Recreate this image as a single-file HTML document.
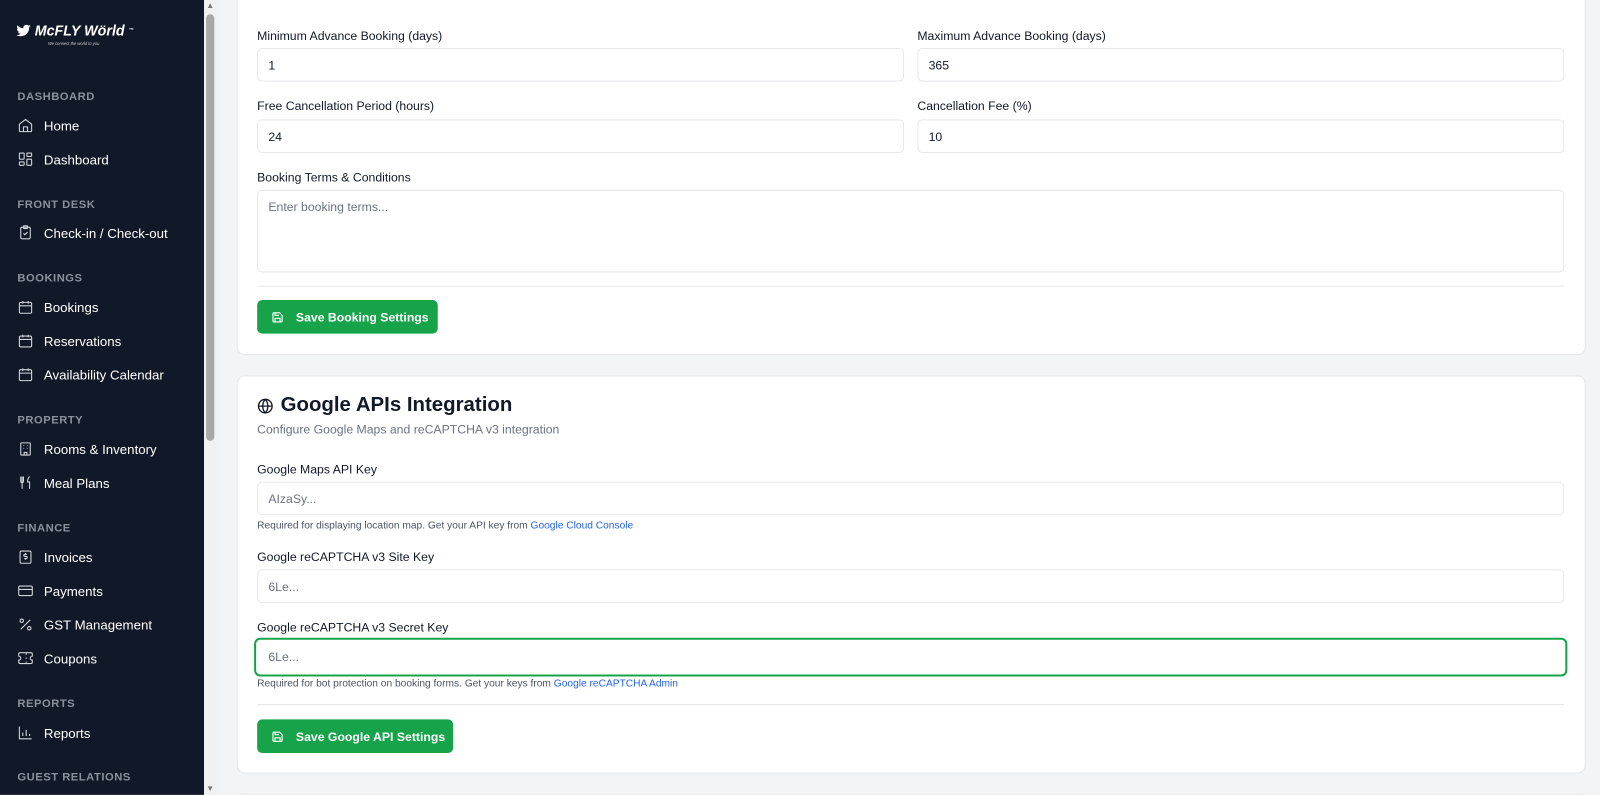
<!DOCTYPE html>
<html style="overflow:hidden;width:1600px;height:795px"><head><meta charset="utf-8"><style>
*{box-sizing:border-box;margin:0;padding:0}
body{width:1600px;height:795px;overflow:hidden;background:#f3f4f6;font-family:"Liberation Sans",Arial,sans-serif;color:#111827;position:relative}
.wrap{position:absolute;left:0;top:0;width:1568px;height:779px;overflow:hidden;transform:scale(1.020408);transform-origin:0 0}
.sb{position:absolute;left:0;top:0;width:200px;height:780px;background:#111827}
.scroll{position:absolute;left:200px;top:0;width:12px;height:780px;background:#f1f1f1}
.thumb{position:absolute;left:202px;top:14px;width:8px;height:418px;background:#a8a8a8;border-radius:4px}
.sh{position:absolute;left:17px;font-size:11px;color:#8b919c;letter-spacing:.5px;font-weight:bold}
.it{position:absolute;left:17px;font-size:13px;color:#fff;display:flex;align-items:center;gap:10px}
.it svg{width:16px;height:16px;stroke:#d1d5db;fill:none;stroke-width:1.6}
.card{position:absolute;left:232px;width:1322px;background:#fff;border:1px solid #e5e7eb;border-radius:8px}
.lbl{position:absolute;font-size:12px;color:#111827}
.inp{position:absolute;height:33px;border:1px solid #e5e7eb;border-radius:5px;font-size:12px;padding:0 10px;display:flex;align-items:center;background:#fff}
.ph{color:#6b7280}
.help{position:absolute;font-size:10px;color:#4b5563}
.help a{color:#2563eb;text-decoration:none}
.btn{position:absolute;height:33px;background:#16a34a;border-radius:5px;color:#fff;font-size:12px;font-weight:bold;display:flex;align-items:center;padding-left:14px;gap:12px}
.hr{position:absolute;left:252px;width:1281px;height:1px;background:#e5e7eb}
</style></head><body><div class="wrap">
<div class="sb">
<div style="position:absolute;left:16px;top:22px;color:#fff;font-weight:bold;font-style:italic;font-size:14px;display:flex;align-items:center;gap:4px"><svg width="14" height="12" viewBox="0 0 24 20"><path d="M24 2.4a10 10 0 0 1-2.8.8A5 5 0 0 0 23.3.4a10 10 0 0 1-3.1 1.2A5 5 0 0 0 11.8 6 14 14 0 0 1 1.7.9a5 5 0 0 0 1.5 6.6A5 5 0 0 1 1 6.9a5 5 0 0 0 3.9 4.8 5 5 0 0 1-2.2.1 5 5 0 0 0 4.6 3.4A10 10 0 0 1 0 17.3 14 14 0 0 0 7.5 19.5c9 0 14-7.5 14-14v-.6A10 10 0 0 0 24 2.4z" fill="#fff"/></svg>McFLY Wörld<sup style="font-size:5px">™</sup></div>
<div style="position:absolute;left:47px;top:40px;color:#ccc;font-size:4px;font-style:italic">We connect the world to you</div>
<div class="sh" style="top:89px">DASHBOARD</div>
<div class="it" style="top:115px"><svg viewBox="0 0 24 24"><path d="M3 10l9-7 9 7v10a1 1 0 0 1-1 1H4a1 1 0 0 1-1-1z M9 21v-7h6v7"/></svg>Home</div>
<div class="it" style="top:148px"><svg viewBox="0 0 24 24"><rect x="3" y="3" width="7" height="9" rx="1"/><rect x="14" y="3" width="7" height="5" rx="1"/><rect x="14" y="12" width="7" height="9" rx="1"/><rect x="3" y="16" width="7" height="5" rx="1"/></svg>Dashboard</div>
<div class="sh" style="top:195px">FRONT DESK</div>
<div class="it" style="top:220px"><svg viewBox="0 0 24 24"><rect x="5" y="4" width="14" height="17" rx="2"/><rect x="9" y="2" width="6" height="4" rx="1"/><path d="M9 13l2 2 4-4"/></svg>Check-in / Check-out</div>
<div class="sh" style="top:267px">BOOKINGS</div>
<div class="it" style="top:293px"><svg viewBox="0 0 24 24"><rect x="3" y="5" width="18" height="16" rx="2"/><path d="M3 10h18M8 3v4M16 3v4"/></svg>Bookings</div>
<div class="it" style="top:326px"><svg viewBox="0 0 24 24"><rect x="3" y="5" width="18" height="16" rx="2"/><path d="M3 10h18M8 3v4M16 3v4"/></svg>Reservations</div>
<div class="it" style="top:359px"><svg viewBox="0 0 24 24"><rect x="3" y="5" width="18" height="16" rx="2"/><path d="M3 10h18M8 3v4M16 3v4M8 14h.01M12 14h.01M16 14h.01M8 18h.01M12 18h.01"/></svg>Availability Calendar</div>
<div class="sh" style="top:406px">PROPERTY</div>
<div class="it" style="top:432px"><svg viewBox="0 0 24 24"><rect x="5" y="3" width="14" height="18" rx="1"/><path d="M10 21v-4h4v4M9 7h1M14 7h1M9 11h1M14 11h1"/></svg>Rooms &amp; Inventory</div>
<div class="it" style="top:465px"><svg viewBox="0 0 24 24"><path d="M5 3v7a2 2 0 0 0 4 0V3M7 3v18M18 3c-2 2-3 5-3 8h3v10"/></svg>Meal Plans</div>
<div class="sh" style="top:512px">FINANCE</div>
<div class="it" style="top:538px"><svg viewBox="0 0 24 24"><rect x="4" y="3" width="16" height="18" rx="2"/><path d="M14 8h-3a1.5 1.5 0 0 0 0 3h2a1.5 1.5 0 0 1 0 3h-3M12 6v2M12 14v2"/></svg>Invoices</div>
<div class="it" style="top:571px"><svg viewBox="0 0 24 24"><rect x="2" y="5" width="20" height="14" rx="2"/><path d="M2 10h20"/></svg>Payments</div>
<div class="it" style="top:604px"><svg viewBox="0 0 24 24"><path d="M19 5L5 19"/><circle cx="6.5" cy="6.5" r="2.5"/><circle cx="17.5" cy="17.5" r="2.5"/></svg>GST Management</div>
<div class="it" style="top:637px"><svg viewBox="0 0 24 24"><path d="M2 9a3 3 0 0 1 0 6v3a2 2 0 0 0 2 2h16a2 2 0 0 0 2-2v-3a3 3 0 0 1 0-6V6a2 2 0 0 0-2-2H4a2 2 0 0 0-2 2z M13 5v2M13 17v2M13 11v2"/></svg>Coupons</div>
<div class="sh" style="top:684px">REPORTS</div>
<div class="it" style="top:710px"><svg viewBox="0 0 24 24"><path d="M3 3v18h18M8 17v-5M13 17V8M18 17v-3"/></svg>Reports</div>
<div class="sh" style="top:756px">GUEST RELATIONS</div>
</div>
<div class="scroll"></div><div class="thumb"></div>
<div style="position:absolute;left:202px;top:1px;font-size:8px;color:#777">▲</div>
<div style="position:absolute;left:202px;top:768px;font-size:8px;color:#777">▼</div>

<div class="card" style="top:-10px;height:358px"></div>
<div class="lbl" style="left:252px;top:28px">Minimum Advance Booking (days)</div>
<div class="lbl" style="left:899px;top:28px">Maximum Advance Booking (days)</div>
<div class="inp" style="left:252px;top:47px;width:634px">1</div>
<div class="inp" style="left:899px;top:47px;width:634px">365</div>
<div class="lbl" style="left:252px;top:97px">Free Cancellation Period (hours)</div>
<div class="lbl" style="left:899px;top:97px">Cancellation Fee (%)</div>
<div class="inp" style="left:252px;top:117px;width:634px">24</div>
<div class="inp" style="left:899px;top:117px;width:634px">10</div>
<div class="lbl" style="left:252px;top:167px">Booking Terms &amp; Conditions</div>
<div class="inp ph" style="left:252px;top:186px;width:1281px;height:81px;align-items:flex-start;padding-top:9px">Enter booking terms...</div>
<div class="hr" style="top:280px"></div>
<div class="btn" style="left:252px;top:294px;width:177px"><svg width="12" height="12" viewBox="0 0 24 24" fill="none" stroke="#fff" stroke-width="2.2"><path d="M5 3h11l5 5v11a2 2 0 0 1-2 2H5a2 2 0 0 1-2-2V5a2 2 0 0 1 2-2zM7 3v5h8M7 21v-7h10v7"/></svg>Save Booking Settings</div>

<div class="card" style="top:368px;height:390px"></div>
<div style="position:absolute;left:252px;top:386px;font-size:20px;font-weight:bold;display:flex;align-items:center;gap:7px"><svg width="16" height="16" viewBox="0 0 24 24" fill="none" stroke="#111827" stroke-width="2"><circle cx="12" cy="12" r="10"/><path d="M2 12h20M12 2a15 15 0 0 1 0 20M12 2a15 15 0 0 0 0 20"/></svg>Google APIs Integration</div>
<div style="position:absolute;left:252px;top:414px;font-size:12px;color:#6b7280">Configure Google Maps and reCAPTCHA v3 integration</div>
<div class="lbl" style="left:252px;top:453px">Google Maps API Key</div>
<div class="inp ph" style="left:252px;top:472px;width:1281px">AIzaSy...</div>
<div class="help" style="left:252px;top:510px">Required for displaying location map. Get your API key from <a>Google Cloud Console</a></div>
<div class="lbl" style="left:252px;top:539px">Google reCAPTCHA v3 Site Key</div>
<div class="inp ph" style="left:252px;top:558px;width:1281px">6Le...</div>
<div class="lbl" style="left:252px;top:608px">Google reCAPTCHA v3 Secret Key</div>
<div class="inp ph" style="left:249px;top:625px;width:1287px;height:38px;border:2px solid #16a34a;border-radius:6px;padding-left:12px">6Le...</div>
<div class="help" style="left:252px;top:665px">Required for bot protection on booking forms. Get your keys from <a>Google reCAPTCHA Admin</a></div>
<div class="hr" style="top:690px"></div>
<div class="btn" style="left:252px;top:705px;width:192px"><svg width="12" height="12" viewBox="0 0 24 24" fill="none" stroke="#fff" stroke-width="2.2"><path d="M5 3h11l5 5v11a2 2 0 0 1-2 2H5a2 2 0 0 1-2-2V5a2 2 0 0 1 2-2zM7 3v5h8M7 21v-7h10v7"/></svg>Save Google API Settings</div>
<div class="card" style="top:778px;height:10px"></div>
</div></body></html>
